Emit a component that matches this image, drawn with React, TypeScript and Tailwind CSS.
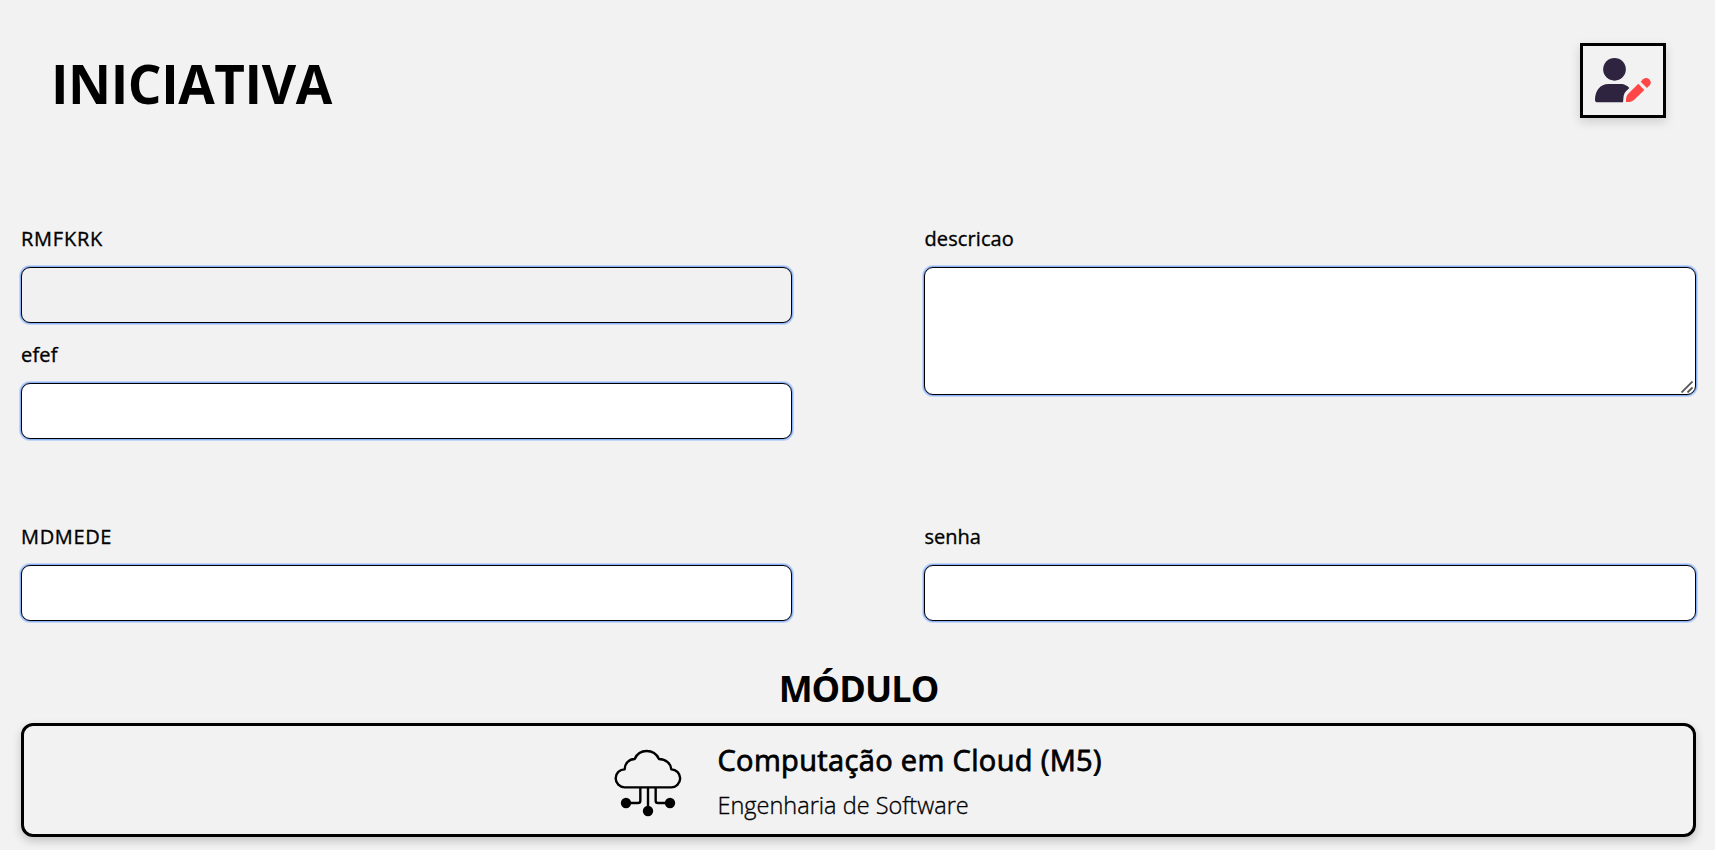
import React from "react";

const fieldBox =
  "block w-full rounded-[9px] border border-black shadow-[0_0_0_1px_#8ab0f6,0_0_0_2px_#c3d5f6] outline-none px-4 text-xl";

const labelText =
  "block h-[30px] pt-px text-[20px] leading-[30px] whitespace-nowrap [-webkit-text-stroke:0.35px_black]";

function Label({ text, spacing, htmlFor }: { text: string; spacing: string; htmlFor: string }) {
  return (
    <label htmlFor={htmlFor} className={labelText}>
      <span className={spacing}>{text}</span>
    </label>
  );
}

function UserEditIcon() {
  return (
    <svg viewBox="69 48 240 207" className="h-[69px] w-[80px]" aria-hidden="true">
      <g fill="#2f2440">
        <circle cx="163.5" cy="118" r="34" />
        <path d="M145 162H184Q198 163 208 174L198 184Q192 190 191 197L189 217H113Q105 217 105 209C105 182 121 162 145 162Z" />
      </g>
      <g fill="#ff4747">
        <path d="M235 161L253 180L222 210Q216 215 209 216H198V206Q199 198 204 192Z" />
        <path d="M242 155L249 148Q258 140 267 147Q277 157 269 166L261 174Z" />
      </g>
    </svg>
  );
}

function CloudIcon() {
  return (
    <svg viewBox="39 39 210 210" className="h-[70px] w-[70px] shrink-0" aria-hidden="true">
      <g fill="none" stroke="#000" strokeWidth="7.2" strokeLinejoin="round">
        <path d="M74 157A27 27 0 0 1 74 103C74 86 87 72 104 72C111 56 125 48 140 48C156 48 170 57 177 72C198 73 213 86 214 103A27 27 0 0 1 213 157Z" />
        <path d="M144 157V228" />
        <path d="M121 157V197Q121 204 114 204H78" />
        <path d="M167 157V197Q167 204 174 204H210" />
      </g>
      <circle cx="78" cy="204" r="15.5" />
      <circle cx="144" cy="228" r="15.5" />
      <circle cx="210" cy="204" r="15.5" />
    </svg>
  );
}

function ResizeGrip() {
  return (
    <svg viewBox="0 0 12 12" className="pointer-events-none absolute right-[3px] bottom-[2px] h-3 w-3" aria-hidden="true">
      <path d="M0.5 11.5L11.5 0.5M6.5 11.5L11.5 6.5" stroke="#555" strokeWidth="1.8" fill="none" />
    </svg>
  );
}

export default function App() {
  return (
    <main className="h-[850px] overflow-hidden bg-[#f2f2f2] pl-[21px] pr-[19px] font-['Open_Sans','Noto_Sans',sans-serif] text-black">
      <header className="flex h-[223px] items-start justify-between pt-[43px] pr-[30px] pl-[30px]">
        <h1 className="mt-[5px] text-[53px] leading-[72px] font-bold tracking-[-0.45px]">INICIATIVA</h1>
        <button
          type="button"
          aria-label="Editar"
          className="flex h-[75px] w-[86px] items-center justify-center border-[3px] border-black shadow-[0_4px_10px_rgba(0,0,0,0.15)]"
        >
          <UserEditIcon />
        </button>
      </header>

      <form>
        <section className="grid h-[298px] grid-cols-[771px_772px] justify-between">
          <div>
            <Label htmlFor="a" text="RMFKRK" spacing="tracking-[0.75px]" />
            <input id="a" disabled className={`${fieldBox} mt-[14px] h-14 bg-[#f1f1f1]`} />
            <div className="mt-4">
              <Label htmlFor="b" text="efef" spacing="tracking-[0.2px]" />
              <input id="b" className={`${fieldBox} mt-[14px] h-14 bg-white`} />
            </div>
          </div>
          <div>
            <Label htmlFor="c" text="descricao" spacing="pl-[0.5px] tracking-[0.1px]" />
            <div className="relative mt-[14px]">
              <textarea id="c" className={`${fieldBox} h-32 resize-none bg-white`} />
              <ResizeGrip />
            </div>
          </div>
        </section>
        <section className="grid h-[143px] grid-cols-[771px_772px] justify-between">
          <div>
            <Label htmlFor="d" text="MDMEDE" spacing="tracking-[0.65px]" />
            <input id="d" className={`${fieldBox} mt-[14px] h-14 bg-white`} />
          </div>
          <div>
            <Label htmlFor="e" text="senha" spacing="pl-[0.5px]" />
            <input id="e" type="password" className={`${fieldBox} mt-[14px] h-14 bg-white`} />
          </div>
        </section>
      </form>

      <h2 className="h-[59px] pt-[1px] text-center text-[36px] leading-[48px] font-bold tracking-[-0.95px]">MÓDULO</h2>
      <section className="flex h-[114px] items-center justify-center rounded-[12px] border-[3px] border-black pt-[6px] shadow-[0_4px_10px_rgba(0,0,0,0.2)]">
        <CloudIcon />
        <div className="ml-[35px] w-[387px] whitespace-nowrap">
          <h3 className="text-[29px] leading-[44px] tracking-[0.35px] [-webkit-text-stroke:0.8px_black]">
            Computação em Cloud (M5)
          </h3>
          <p className="text-[23.5px] leading-[46px] font-light [-webkit-text-stroke:0.35px_black]">
            Engenharia de Software
          </p>
        </div>
      </section>
    </main>
  );
}
